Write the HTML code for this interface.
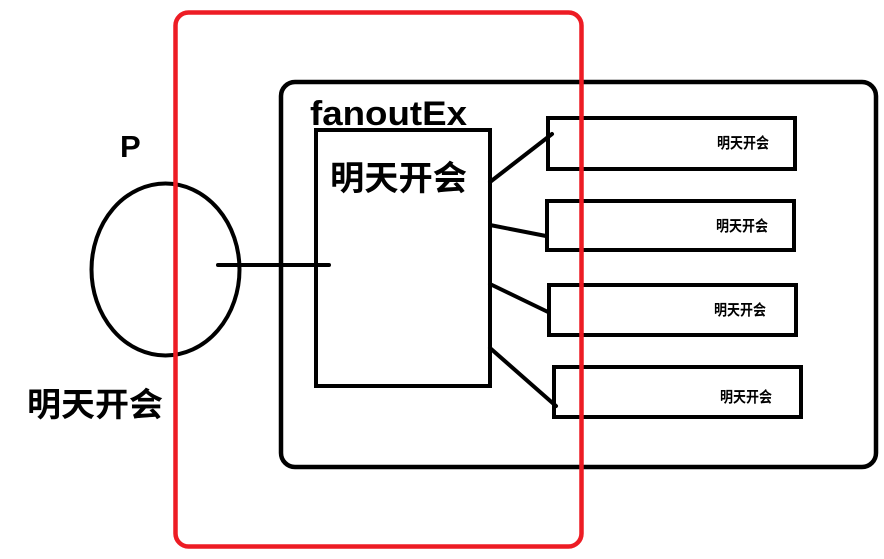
<!DOCTYPE html>
<html><head><meta charset="utf-8"><style>
html,body{margin:0;padding:0;background:#fff;}
svg{display:block;}
text{font-family:"Liberation Sans","Noto Sans CJK SC",sans-serif;font-weight:bold;fill:#000;}
</style></head><body>
<svg width="884" height="559" viewBox="0 0 884 559" xmlns="http://www.w3.org/2000/svg">
<rect width="884" height="559" fill="#fff"/>
<rect x="281" y="82" width="595" height="385" rx="14" fill="none" stroke="#000" stroke-width="4.5"/>
<ellipse cx="165.5" cy="269.5" rx="74" ry="86" fill="none" stroke="#000" stroke-width="4"/>
<line x1="218" y1="265" x2="329" y2="265" stroke="#000" stroke-width="4" stroke-linecap="round"/>
<rect x="316" y="130" width="174" height="256" fill="none" stroke="#000" stroke-width="4"/>
<g fill="none" stroke="#000" stroke-width="4" stroke-linecap="round">
<line x1="490" y1="182" x2="552" y2="134"/>
<line x1="490" y1="225" x2="546" y2="236"/>
<line x1="490" y1="284" x2="548" y2="312"/>
<line x1="490" y1="348" x2="556" y2="406"/>
<rect x="548" y="118" width="247" height="51"/>
<rect x="547" y="201" width="247" height="49"/>
<rect x="549" y="285" width="247" height="50"/>
<rect x="554" y="367" width="247" height="50"/>
</g>
<text x="310" y="125" font-size="34" textLength="157" lengthAdjust="spacingAndGlyphs">fanoutEx</text>
<text x="330" y="190" font-size="34" textLength="137" lengthAdjust="spacingAndGlyphs">明天开会</text>
<text x="120" y="157" font-size="31">P</text>
<text x="27" y="416" font-size="33" textLength="136" lengthAdjust="spacingAndGlyphs">明天开会</text>
<text x="717" y="148" font-size="15" textLength="52" lengthAdjust="spacingAndGlyphs">明天开会</text>
<text x="716" y="231" font-size="15" textLength="52" lengthAdjust="spacingAndGlyphs">明天开会</text>
<text x="714" y="315" font-size="15" textLength="52" lengthAdjust="spacingAndGlyphs">明天开会</text>
<text x="720" y="402" font-size="15" textLength="52" lengthAdjust="spacingAndGlyphs">明天开会</text>
<rect x="175.5" y="12.5" width="406" height="534" rx="13" fill="none" stroke="#ed1c24" stroke-width="4.5"/>
</svg>
</body></html>
